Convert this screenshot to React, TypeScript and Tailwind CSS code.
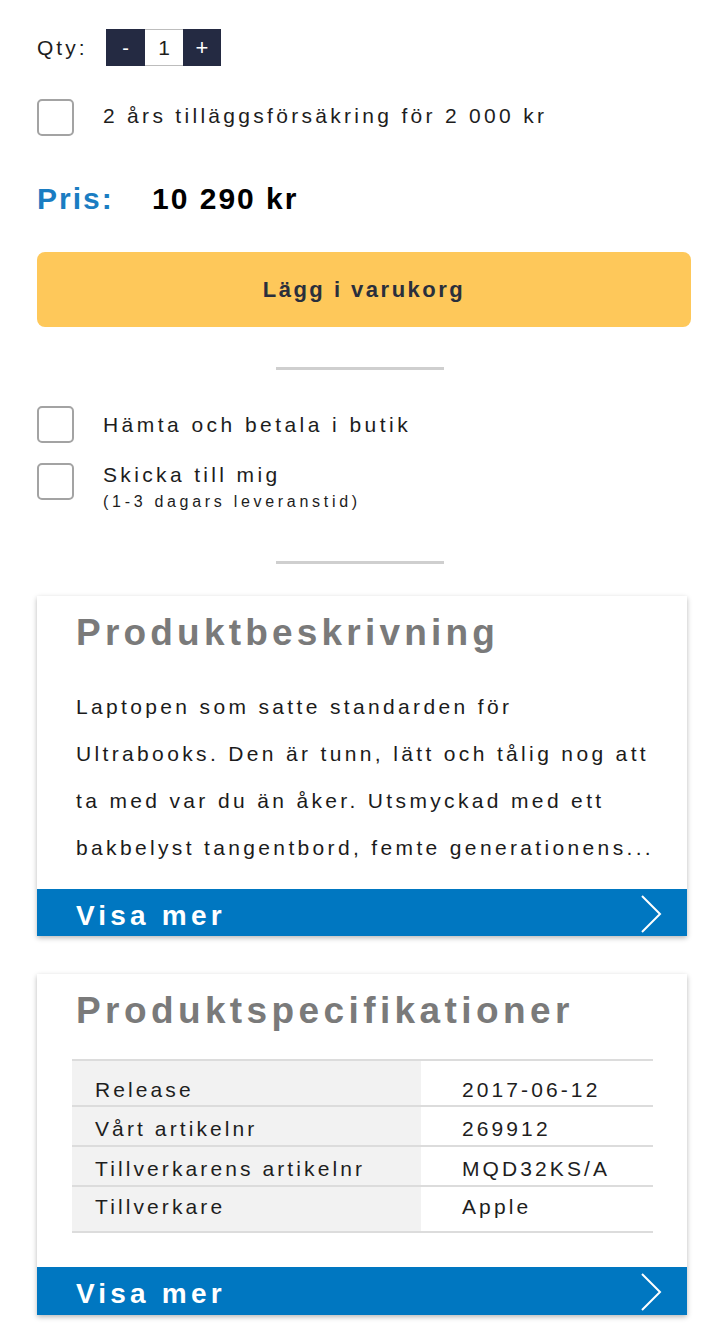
import React from "react";

const Checkbox = () => (
  <div className="w-[37px] h-[37px] shrink-0 rounded-[5px] border-2 border-[#a3a3a3] bg-white" />
);

const Chevron = () => (
  <svg width="24" height="40" viewBox="0 0 24 40" className="block">
    <path d="M3 2 L21 20 L3 38" fill="none" stroke="#ffffff" strokeWidth="2" />
  </svg>
);

const VisaMer = ({ h }: { h: string }) => (
  <div className={`${h} bg-[#0077c1] flex items-start justify-between pl-[39px] pr-[24px] pt-[7px]`}>
    <span className="text-white font-bold text-[28px] leading-[40px] tracking-[4.2px]">Visa mer</span>
    <div className="-mt-[2px]">
      <Chevron />
    </div>
  </div>
);

const specs: { k: string; v: string; h: string; pt: string }[] = [
  { k: "Release", v: "2017-06-12", h: "h-[46px]", pt: "pt-[18px]" },
  { k: "Vårt artikelnr", v: "269912", h: "h-[40px]", pt: "pt-[11px]" },
  { k: "Tillverkarens artikelnr", v: "MQD32KS/A", h: "h-[40px]", pt: "pt-[11px]" },
  { k: "Tillverkare", v: "Apple", h: "h-[46px]", pt: "pt-[9px]" },
];

export default function App() {
  return (
    <div
      className="w-[720px] min-h-[1337px] bg-white pl-[37px] pt-[29px] pb-[20px] text-[#1d1d1d]"
      style={{ fontFamily: '"Liberation Sans", Arial, sans-serif' }}
    >
      {/* Qty */}
      <div className="flex items-center h-[37px]">
        <span className="w-[69px] text-[21px] leading-none tracking-[3px]">Qty:</span>
        <div className="flex h-[37px]">
          <div className="w-[39px] h-[37px] bg-[#242a42] text-white flex items-center justify-center text-[20px] leading-none">-</div>
          <div className="w-[38px] h-[37px] bg-white border-y border-[#bdbdbd] flex items-center justify-center text-[21px] leading-none">1</div>
          <div className="w-[38px] h-[37px] bg-[#242a42] text-white flex items-center justify-center text-[22px] leading-none">+</div>
        </div>
      </div>

      {/* Insurance */}
      <div className="flex items-center mt-[32px] h-[38px]">
        <Checkbox />
        <span className="ml-[29px] text-[21px] leading-[21px] tracking-[3.3px] -mt-[4px]">
          2 års tilläggsförsäkring för 2 000 kr
        </span>
      </div>

      {/* Price */}
      <div className="flex items-start mt-[48px] h-[30px]">
        <span className="w-[115px] text-[30px] leading-none font-bold text-[#1a7dc2] tracking-[2px]">Pris:</span>
        <span className="text-[30px] leading-none font-bold text-black tracking-[2px]">10 290 kr</span>
      </div>

      {/* Button */}
      <div className="mt-[38px] w-[654px] h-[75px] rounded-[8px] bg-[#fec85a] flex items-center justify-center">
        <span className="text-[22px] font-bold tracking-[2.5px] text-[#2a2f3c] leading-none">Lägg i varukorg</span>
      </div>

      {/* Divider */}
      <div className="mt-[40px] ml-[239px] w-[168px] h-[3px] bg-[#cfcfcf]" />

      {/* Delivery options */}
      <div className="flex items-center mt-[36px] h-[37px]">
        <Checkbox />
        <span className="ml-[29px] text-[21px] leading-[21px] tracking-[3.45px]">Hämta och betala i butik</span>
      </div>
      <div className="flex items-start mt-[20px]">
        <Checkbox />
        <div className="ml-[29px] flex flex-col">
          <span className="text-[21px] leading-[21px] tracking-[3.35px] mt-[1px]">Skicka till mig</span>
          <span className="text-[16px] leading-[16px] tracking-[3.7px] mt-[9px]">(1-3 dagars leveranstid)</span>
        </div>
      </div>

      {/* Divider */}
      <div className="mt-[51px] ml-[239px] w-[168px] h-[3px] bg-[#cfcfcf]" />

      {/* Card 1 */}
      <div className="mt-[32px] w-[650px] bg-white shadow-[0_2px_5px_rgba(0,0,0,0.28)]">
        <div className="pl-[39px] pt-[18px] pr-[10px]">
          <div className="text-[37px] leading-none font-bold text-[#7a7a7a] tracking-[4.2px]">Produktbeskrivning</div>
          <div className="mt-[32px] text-[21px] leading-[47px] tracking-[3.35px] text-[#1b1b1b] pb-[18px] whitespace-nowrap">
            <div>Laptopen som satte standarden för</div>
            <div>Ultrabooks. Den är tunn, lätt och tålig nog att</div>
            <div>ta med var du än åker. Utsmyckad med ett</div>
            <div>bakbelyst tangentbord, femte generationens...</div>
          </div>
        </div>
        <VisaMer h="h-[47px]" />
      </div>

      {/* Card 2 */}
      <div className="mt-[38px] w-[650px] bg-white shadow-[0_2px_5px_rgba(0,0,0,0.28)]">
        <div className="pl-[39px] pt-[18px]">
          <div className="text-[37px] leading-none font-bold text-[#7a7a7a] tracking-[4.4px]">Produktspecifikationer</div>
        </div>
        <div className="mt-[30px] ml-[35px] w-[581px] border-t-2 border-[#dcdcdc]">
          {specs.map((r) => (
            <div
              key={r.k}
              className={`grid grid-cols-[349px_1fr] ${r.h} border-b-2 border-[#dcdcdc] text-[21px] leading-[21px] tracking-[3.1px] text-[#1e1e1e]`}
            >
              <div className={`bg-[#f2f2f2] pl-[23px] ${r.pt}`}>{r.k}</div>
              <div className={`pl-[41px] ${r.pt}`}>{r.v}</div>
            </div>
          ))}
        </div>
        <div className="mt-[34px]">
          <VisaMer h="h-[48px]" />
        </div>
      </div>
    </div>
  );
}
